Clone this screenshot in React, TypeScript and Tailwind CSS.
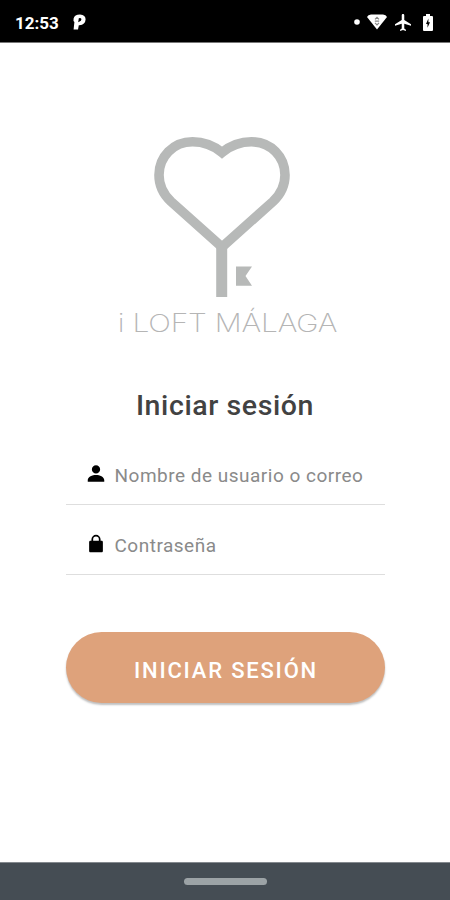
import type { ReactNode } from 'react';

function StatusBar() {
  return (
    <header className="h-[43px] shrink-0 bg-black border-b border-[#777] flex items-center justify-between pl-[15px] pr-[17px] pt-[2px] text-white">
      <div className="flex items-center gap-[14px]">
        <span className="text-[17px] leading-5 font-bold tracking-[0px] mt-[1px]">12:53</span>
        <svg className="w-[13px] h-[16px]" viewBox="0 0 13 16">
          <path d="M0.6 4.5Q1.5 0.4 7 0.4Q12.7 0.6 12.6 5.6Q12.2 11 6.5 11.2H5.8L5 15.4H0.6L1.4 8Q0 7.2 0.6 4.5Z" fill="white" />
          <path d="M5.2 8.2 5.8 4.2Q8.6 3.4 8.4 5.6Q8.2 7.4 6.6 7.4Z" fill="black" />
        </svg>
      </div>
      <div className="flex items-center">
        <svg className="w-[6px] h-[6px]" viewBox="0 0 6 6">
          <circle cx="3" cy="3" r="2.8" fill="white" />
        </svg>
        <svg className="w-[20px] h-[16px] ml-[7px]" viewBox="0 0 20 16">
          <path d="M0 3Q1 0.5 4 0.5H16Q19 0.5 20 3L10 15.5Z" fill="white" />
          <path d="M8 5.4 10 3.4l2 2M8 8.8l2 2 2-2M7.8 7.1h4.4" stroke="#888" strokeWidth="1.2" fill="none" />
        </svg>
        <svg className="w-[16px] h-[17px] ml-[8px]" viewBox="2 2 19 20">
          <path d="M21 16v-2l-8-5V3.5c0-.83-.67-1.5-1.5-1.5S10 2.67 10 3.5V9l-8 5v2l8-2.5V19l-2 1.5V22l3.5-1 3.5 1v-1.5L13 19v-5.5l8 2.5z" fill="white" />
        </svg>
        <svg className="w-[10px] h-[17px] ml-[12px]" viewBox="0 0 10 17">
          <path d="M3 0h4v2h2q1 0 1 1v13q0 1-1 1H1q-1 0-1-1V3q0-1 1-1h2z" fill="white" />
          <path d="M5.4 4.5 3 10h1.5v3.8L7 8.3H5.4z" fill="black" />
        </svg>
      </div>
    </header>
  );
}

function Logo() {
  return (
    <svg className="w-[230px] h-[210px]" viewBox="0 0 230 210">
      <g fill="none" stroke="#b7b9b8" strokeWidth="9.6">
        <path d="M109 22.5C101 16 91 11.8 79.5 11.8C60 11.8 46 27 46 45C46 55 50.5 64.5 58 71.5L109 117L160 71.5C167.5 64.5 172 55 172 45C172 27 158 11.8 138.5 11.8C127 11.8 117 16 109 22.5Z" />
        <path d="M108.7 114V167" strokeWidth="11" />
      </g>
      <path d="M123 136.5h16l-6.5 9.5 6.5 9.7h-16z" fill="#b7b9b8" />
      <text
        x="4"
        y="202"
        textLength="183"
        transform="scale(1.2 1)"
        className="font-['Inter'] font-extralight text-[25px]"
        fill="#b5b5b5"
      >
        i LOFT MÁLAGA
      </text>
    </svg>
  );
}

function Field({ icon, type, placeholder }: { icon: ReactNode; type: string; placeholder: string }) {
  return (
    <label className="h-[70px] w-[319px] flex items-center border-b border-[#dedede] pl-[19px] pt-[11px]">
      <span className="w-[22px] h-[22px] shrink-0 mb-[3px]">{icon}</span>
      <input
        type={type}
        placeholder={placeholder}
        className="ml-[8px] mt-[2px] w-[265px] bg-transparent text-[19px] tracking-[0.5px] outline-none placeholder:text-[#8a8a8a]"
      />
    </label>
  );
}

export default function App() {
  return (
    <div className="h-screen w-full flex flex-col bg-white font-['Roboto',sans-serif] overflow-hidden">
      <StatusBar />

      <main className="flex-1 flex flex-col items-center">
        <div className="mt-[87px] ml-[5px]">
          <Logo />
        </div>
        <h1 className="mt-[48px] text-[28.5px] leading-[36px] font-medium tracking-[0.6px] text-[#424242]">Iniciar sesión</h1>

        <form className="mt-[11px] flex flex-col items-center" onSubmit={(e) => e.preventDefault()}>
          <Field
            type="text"
            placeholder="Nombre de usuario o correo"
            icon={
              <svg viewBox="0 0 24 24" fill="black">
                <path d="M12 11.5a4.5 4.5 0 1 0 0-9 4.5 4.5 0 0 0 0 9zM3 20.5v-2c0-3.5 5-5.5 9-5.5s9 2 9 5.5v2z" />
              </svg>
            }
          />
          <Field
            type="password"
            placeholder="Contraseña"
            icon={
              <svg viewBox="0 0 24 24" fill="black">
                <path d="M18 8.5h-1V7A5 5 0 0 0 7 7v1.5H6c-1 0-1.5.6-1.5 1.5v9.5c0 1 .6 1.5 1.5 1.5h12c1 0 1.5-.6 1.5-1.5V10c0-1-.6-1.5-1.5-1.5zM8.9 7a3.1 3.1 0 0 1 6.2 0v1.5H8.9z" />
              </svg>
            }
          />
          <button
            type="submit"
            className="mt-[57px] w-[319px] h-[71px] rounded-full bg-[#dea27b] text-white text-[22px] font-medium tracking-[1.8px] pt-[5px] pl-[2px] shadow-[0_2px_2px_rgba(0,0,0,0.25)]"
          >
            INICIAR SESIÓN
          </button>
        </form>
      </main>

      <nav className="h-[38px] shrink-0 bg-[#454d54] border-t border-[#84898e] flex items-center justify-center">
        <div className="w-[83px] h-[7px] rounded-full bg-[#9ca3a6]" />
      </nav>
    </div>
  );
}
